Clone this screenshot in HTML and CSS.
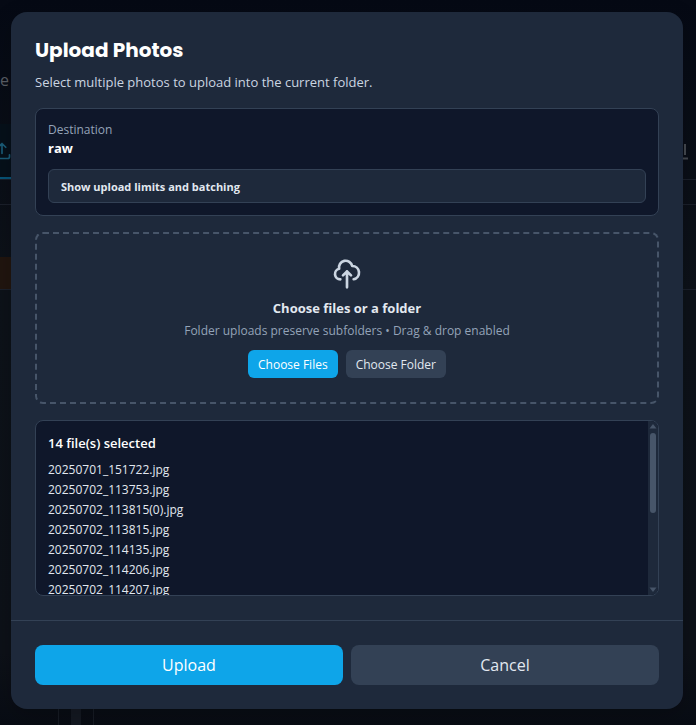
FILE: index.html
```
<!DOCTYPE html>
<html lang="en">
<head>
  <meta charset="UTF-8" />
  <meta name="viewport" content="width=device-width, initial-scale=1" />
  <title>Upload Photos</title>
  <link rel="stylesheet" href="styles.css">
</head>
<body>

  <!-- Page behind the dialog -->
  <div class="page" aria-hidden="true">
    <div class="page-intro">e</div>
    <div class="page-tabs">
      <span class="tab active">
        <svg class="tab-icon" viewBox="0 0 24 24"><path d="M3 16.5v2.25A2.25 2.25 0 0 0 5.25 21h13.5A2.25 2.25 0 0 0 21 18.75V16.5M7.5 7.5 12 3m0 0 4.5 4.500M12 3v12" /></svg>
      </span>
      <svg class="tool-icon" viewBox="0 0 20 20"><path d="M17 3v11M3 17.500h17" /></svg>
    </div>
    <div class="page-toolbar"></div>
    <div class="page-row"><span class="notice"></span></div>
    <div class="page-main"><div class="page-column"><span></span></div></div>
  </div>

  <div class="overlay">
    <div class="modal" role="dialog" aria-modal="true" aria-labelledby="modal-title">
      <div class="modal-body">
        <header>
          <h2 id="modal-title">Upload Photos</h2>
          <p class="subtitle">Select multiple photos to upload into the current folder.</p>
        </header>

        <section class="destination">
          <div class="label">Destination</div>
          <div class="folder">raw</div>
          <button type="button" class="limits-btn">Show upload limits and batching</button>
        </section>

        <section class="dropzone">
          <svg class="cloud" viewBox="0 0 24 24">
            <path d="M7 16a4 4 0 0 1-.88-7.903A5 5 0 1 1 15.900 6L16 6a5 5 0 0 1 1 9.900M15 13l-3-3m0 0-3 3m3-3v12" />
          </svg>
          <h3>Choose files or a folder</h3>
          <p>Folder uploads preserve subfolders • Drag &amp; drop enabled</p>
          <div class="choose">
            <button type="button" class="btn-small primary">Choose Files</button>
            <button type="button" class="btn-small">Choose Folder</button>
          </div>
        </section>

        <section class="files">
          <div class="files-scroll">
            <h3>14 file(s) selected</h3>
            <ul>
              <li>20250701_151722.jpg</li>
              <li>20250702_113753.jpg</li>
              <li>20250702_113815(0).jpg</li>
              <li>20250702_113815.jpg</li>
              <li>20250702_114135.jpg</li>
              <li>20250702_114206.jpg</li>
              <li>20250702_114207.jpg</li>
            </ul>
          </div>
          <div class="scrollbar" aria-hidden="true">
            <svg viewBox="0 0 10 12"><path d="M5 3 8.500 7.500h-7z" /></svg>
            <span class="thumb"></span>
            <svg viewBox="0 0 10 12"><path d="M5 9 8.500 4.500h-7z" /></svg>
          </div>
        </section>
      </div>

      <footer>
        <button type="button" class="btn primary">Upload</button>
        <button type="button" class="btn">Cancel</button>
      </footer>
    </div>
  </div>

</body>
</html>
```
FILE: styles.css
```
* {
  box-sizing: border-box;
}
body {
  margin: 0;
  min-height: 100vh;
  position: relative;
  overflow: hidden;
  background: linear-gradient(#050914, #0d1219 40%, #0d1118 90%, #080c14);
  font-family: "Segoe UI", "Open Sans", "Noto Sans", sans-serif;
  color: #e2e8f0;
}
h2, h3, p, ul {
  margin: 0;
  padding: 0;
}
button {
  font-family: inherit;
  border: none;
  cursor: pointer;
}

/* page behind the dialog */
.page {
  position: absolute;
  inset: 0;
  display: flex;
  flex-direction: column;
}
.page-intro {
  height: 124px;
  padding-top: 68px;
  font-size: 16px;
  line-height: 24px;
  color: #5b5f66;
}
.page-tabs {
  display: flex;
  justify-content: space-between;
  align-items: stretch;
  height: 56px;
  border-bottom: 1px solid #1b202b;
}
.tab {
  width: 60px;
  padding-top: 17px;
}
.tab.active {
  background: #06101a;
  border-bottom: 2px solid #075478;
}
.tab-icon {
  display: block;
  width: 20px;
  height: 20px;
  margin-left: -8px;
  fill: none;
  stroke: #1a5c78;
  stroke-width: 2;
  stroke-linecap: round;
  stroke-linejoin: round;
}
.tool-icon {
  width: 20px;
  height: 20px;
  margin: 17px 8px 0 0;
  fill: none;
  stroke: #454950;
  stroke-width: 2;
}
.page-toolbar {
  height: 25px;
  border-bottom: 1px solid #1b202b;
}
.page-row {
  height: 85px;
  padding-top: 52px;
  border-bottom: 1px solid #1b202b;
}
.notice {
  display: block;
  width: 50%;
  height: 32px;
  background: #21150f;
}
.page-main {
  flex: 1;
  display: flex;
  padding-left: 58px;
}
.page-column {
  width: 36px;
  padding: 0 12px;
  display: flex;
  border: 1px solid #171c25;
  border-width: 0 1px;
}
.page-column span {
  flex: 1;
  background: #141922;
}

/* dialog */
.overlay {
  position: relative;
  min-height: 100vh;
  padding: 12px 13px 16px 11px;
}
.modal {
  max-width: 672px;
  margin: 0 auto;
  background: #1e293b;
  border-radius: 16px;
  box-shadow: 0 8px 24px rgba(0, 0, 0, 0.2);
}
.modal-body {
  display: flex;
  flex-direction: column;
  gap: 16px;
  padding: 24px;
}
h2 {
  font-family: Poppins, Inter, sans-serif;
  font-size: 20px;
  font-weight: 700;
  line-height: 28px;
  color: #fff;
}
.subtitle {
  margin-top: 8px;
  font-size: 13px;
  line-height: 20px;
  color: #cbd5e1;
}
.destination {
  padding: 12px;
  background: #0f172a;
  border: 1px solid #334155;
  border-radius: 8px;
}
.label {
  font-size: 12px;
  line-height: 18px;
  color: #94a3b8;
}
.folder {
  font-size: 13px;
  font-weight: 700;
  line-height: 18px;
  color: #fff;
}
.limits-btn {
  display: block;
  width: 100%;
  margin-top: 12px;
  padding: 9px 12px 7px;
  text-align: left;
  font-size: 11px;
  font-weight: 700;
  line-height: 16px;
  color: #e2e8f0;
  background: #1e293b;
  border: 1px solid #334155;
  border-radius: 6px;
}
.dropzone {
  display: flex;
  flex-direction: column;
  align-items: center;
  padding: 24px;
  border: 2px dashed #475569;
  border-radius: 8px;
}
.cloud {
  width: 32px;
  height: 32px;
  fill: none;
  stroke: #cbd5e1;
  stroke-width: 2;
  stroke-linecap: round;
  stroke-linejoin: round;
}
.dropzone h3 {
  margin-top: 8px;
  font-size: 13px;
  font-weight: 700;
  line-height: 20px;
}
.dropzone p {
  margin-top: 4px;
  font-size: 12px;
  line-height: 18px;
  color: #94a3b8;
}
.choose {
  display: flex;
  gap: 8px;
  margin-top: 10px;
}
.btn-small {
  padding: 7px 10px 5px;
  font-size: 12px;
  font-weight: 500;
  line-height: 16px;
  color: #e2e8f0;
  background: #334155;
  border-radius: 6px;
}
.files {
  position: relative;
  height: 176px;
  overflow: hidden;
  background: #0f172a;
  border: 1px solid #334155;
  border-radius: 8px;
}
.files-scroll {
  height: 100%;
  padding: 12px;
  overflow-y: auto;
  scrollbar-width: none;
}
.files h3 {
  font-size: 13px;
  font-weight: 600;
  line-height: 20px;
  color: #fff;
}
.files ul {
  margin-top: 7px;
  list-style: none;
  font-size: 12px;
  line-height: 20px;
}
.scrollbar {
  position: absolute;
  top: 0;
  right: 0;
  bottom: 0;
  width: 10px;
  display: flex;
  flex-direction: column;
  background: #1e293b;
}
.scrollbar svg {
  width: 10px;
  height: 12px;
  fill: #475569;
}
.scrollbar svg:last-child {
  margin-top: auto;
}
.thumb {
  height: 80px;
  margin: 0 2px;
  background: #475569;
  border-radius: 3px;
}
footer {
  display: flex;
  gap: 8px;
  padding: 24px;
  border-top: 1px solid #334155;
}
.btn {
  flex: 1;
  padding: 8px 16px;
  font-size: 16px;
  line-height: 24px;
  color: #e2e8f0;
  background: #334155;
  border-radius: 8px;
}
.primary {
  color: #fff;
  background: #0ea5e9;
}
```
